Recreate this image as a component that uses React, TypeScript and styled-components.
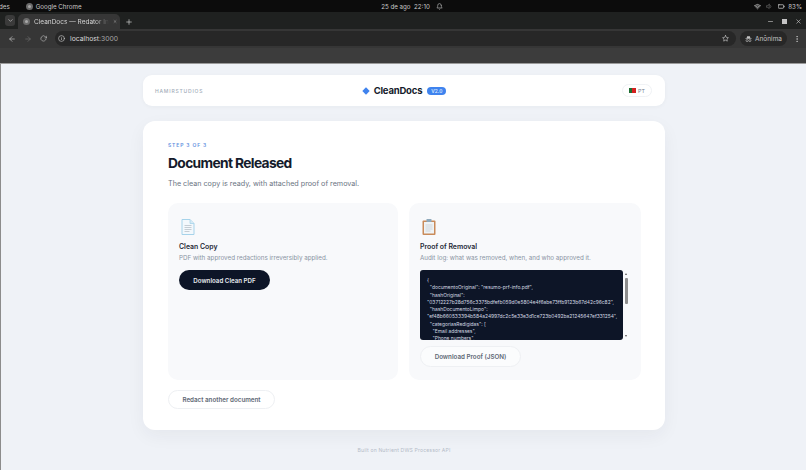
import React from 'react';
import styled, { createGlobalStyle } from 'styled-components';
import { FiArrowLeft, FiArrowRight, FiRotateCw, FiInfo, FiStar, FiX, FiPlus, FiChevronDown, FiMinus, FiMoreVertical, FiBell, FiWifi, FiVolume1, FiBattery } from 'react-icons/fi';

const GlobalStyle = createGlobalStyle`
  html, body { margin: 0; padding: 0; width: 806px; height: 470px; overflow: hidden; background: #eff2f7; }
  body { font-family: Inter, "Liberation Sans", sans-serif; }
  * { box-sizing: border-box; }
`;

const Screen = styled.div`
  width: 806px;
  height: 470px;
  display: flex;
  flex-direction: column;
  overflow: hidden;
`;

const SystemBar = styled.div`
  height: 12px;
  background: #0c0c0c;
  color: #c9c9c9;
  font-size: 6.2px;
  display: grid;
  grid-template-columns: 1fr auto 1fr;
  align-items: center;
  padding: 0 4px 0 0;
`;

const SystemLeft = styled.div`
  display: flex;
  align-items: center;
  gap: 16px;
  margin-left: -1px;
`;

const AppName = styled.div`
  display: flex;
  align-items: center;
  gap: 3px;
`;

const ChromeDot = styled.span`
  flex: none;
  width: 7px;
  height: 7px;
  border-radius: 50%;
  background: #a8a8a8;
  border: 2px solid #6c6c6c;
`;

const SystemCenter = styled.div`
  display: flex;
  align-items: center;
  gap: 6px;
  margin-left: 22px;
`;

const SystemRight = styled.div`
  display: flex;
  align-items: center;
  justify-content: flex-end;
  gap: 5px;
`;

const TabStrip = styled.div`
  height: 17px;
  background: #1f2120;
  display: flex;
  align-items: flex-end;
  padding-left: 5px;
  color: #d4d4d4;
`;

const TabMenu = styled.div`
  width: 10px;
  height: 11px;
  margin-bottom: 3px;
  margin-right: 3px;
  border-radius: 3px;
  background: #3a3a3a;
  display: flex;
  align-items: center;
  justify-content: center;
  font-size: 7px;
`;

const Tab = styled.div`
  width: 102px;
  height: 15px;
  background: #363636;
  border-radius: 5px 5px 0 0;
  display: flex;
  align-items: center;
  padding: 0 3px 0 5px;
  gap: 4px;
  font-size: 6.5px;
  white-space: nowrap;
`;

const TabTitle = styled.span`
  flex: 1;
  -webkit-mask-image: linear-gradient(to right, #000 82%, transparent 100%);
  mask-image: linear-gradient(to right, #000 82%, transparent 100%);
`;

const NewTab = styled.div`
  height: 15px;
  display: flex;
  align-items: center;
  margin-left: 5px;
  font-size: 8px;
`;

const WindowControls = styled.div`
  margin-left: auto;
  height: 15px;
  padding-right: 4px;
  display: flex;
  align-items: center;
  gap: 8px;
  font-size: 7px;
`;

const RestoreIcon = styled.span`
  width: 5px;
  height: 5px;
  background: #c4c4c4;
  display: block;
`;

const Toolbar = styled.div`
  height: 19px;
  background: #363636;
  display: flex;
  align-items: center;
  gap: 8px;
  padding: 0 5px 0 8px;
  color: #c4c4c4;
  font-size: 8px;
`;

const ArrowDim = styled.span`
  color: #6e6e6e;
  display: flex;
`;

const Omnibox = styled.div`
  flex: 1;
  height: 15px;
  border-radius: 8px;
  background: #272727;
  display: flex;
  align-items: center;
  padding: 0 7px 0 3px;
  gap: 5px;
  font-size: 6.8px;
  color: #d6d6d6;
`;

const Url = styled.span`
  flex: 1;
`;

const UrlPort = styled.span`
  color: #a4a4a4;
`;

const IncognitoPill = styled.div`
  width: 47px;
  height: 15px;
  margin-left: -4px;
  margin-right: -2px;
  padding: 0 5px;
  border-radius: 8px;
  background: #272727;
  display: flex;
  align-items: center;
  gap: 3px;
  font-size: 6.5px;
`;

const BookmarkBar = styled.div`
  height: 16px;
  background: #3c3c3c;
  border-bottom: 1px solid #9a9a9a;
`;

const Page = styled.div`
  flex: 1;
  background: #eff2f7;
  padding: 11px 141px 0 143px;
  display: flex;
  flex-direction: column;
  box-shadow: inset 1px 0 0 #8c8c8c;
`;

const Header = styled.header`
  height: 31px;
  border-radius: 9px;
  background: #fff;
  box-shadow: 0 1px 4px rgba(30, 41, 59, 0.04);
  display: grid;
  grid-template-columns: 1fr auto 1fr;
  align-items: center;
  padding: 0 13px 0 12px;
`;

const Studio = styled.div`
  font-size: 5px;
  letter-spacing: 0.8px;
  color: #a3acb9;
  font-weight: 500;
`;

const Brand = styled.div`
  display: flex;
  align-items: center;
  gap: 4px;
  margin-left: 1px;
`;

const BrandName = styled.span`
  font-size: 9.5px;
  font-weight: 700;
  letter-spacing: -0.2px;
  color: #141b2b;
`;

const Version = styled.span`
  height: 8px;
  padding: 0 4px;
  margin-left: 1px;
  border-radius: 4px;
  background: #3f83ee;
  color: #d9e7ff;
  font-size: 4.8px;
  line-height: 8px;
  font-weight: 600;
`;

const LangWrap = styled.div`
  display: flex;
  justify-content: flex-end;
`;

const LangButton = styled.div`
  width: 30px;
  height: 13px;
  border-radius: 7px;
  border: 1px solid #f0f2f5;
  display: flex;
  align-items: center;
  justify-content: center;
  gap: 2px;
  font-size: 5.3px;
  color: #76808f;
`;

const Flag = styled.span`
  flex: none;
  width: 7px;
  height: 5px;
  background: linear-gradient(to right, #1f6e33 40%, #d5201f 40%);
`;

const MainCard = styled.main`
  margin-top: 15px;
  height: 309px;
  border-radius: 12px;
  background: #fff;
  box-shadow: 0 6px 18px rgba(30, 41, 59, 0.05);
  padding: 21px 24px 0 25px;
`;

const Step = styled.div`
  font-size: 5px;
  line-height: 6px;
  letter-spacing: 0.85px;
  font-weight: 600;
  color: #5f8fe0;
`;

const Title = styled.h1`
  margin: 6px 0 0;
  font-size: 13.8px;
  line-height: 18px;
  font-weight: 700;
  letter-spacing: -0.65px;
  color: #141b2b;
`;

const Lead = styled.p`
  margin: 6px 0 0;
  font-size: 7.2px;
  line-height: 11px;
  color: #6a7482;
`;

const CardGrid = styled.div`
  margin-top: 14px;
  display: grid;
  grid-template-columns: 230px 232px;
  gap: 11px;
`;

const Panel = styled.section`
  height: 177px;
  border-radius: 10px;
  background: #f8f9fb;
  padding: 15px 11px 0;
`;

const PanelIcon = styled.svg`
  display: block;
  width: 18px;
  height: 18px;
`;

const PanelTitle = styled.h2`
  margin: 6px 0 0;
  font-size: 6.9px;
  line-height: 10px;
  font-weight: 600;
  color: #1f2937;
`;

const PanelText = styled.p`
  margin: 2px 0 0;
  font-size: 6.25px;
  line-height: 9px;
  color: #8a94a3;
  white-space: nowrap;
`;

const PrimaryButton = styled.button`
  display: block;
  margin-top: 7px;
  width: 91px;
  height: 20px;
  padding: 0;
  border: 0;
  border-radius: 11px;
  background: #0d1527;
  color: #e8ebf0;
  font: 600 6.2px Inter, sans-serif;
`;

const LogWrap = styled.div`
  margin-top: 7px;
  width: 211px;
  height: 70px;
  display: flex;
`;

const Log = styled.pre`
  margin: 0;
  width: 203px;
  height: 70px;
  border-radius: 3px;
  overflow: hidden;
  background: #0d1527;
  color: #d4d9e2;
  padding: 7px 0 0 7px;
  font: 400 4.9px/7.3px Inter, sans-serif;
  white-space: pre;
`;

const ScrollTrack = styled.div`
  flex: 1;
  position: relative;
  background: #f8f9fb;
`;

const ScrollThumb = styled.div`
  position: absolute;
  top: 8px;
  left: 2px;
  width: 3px;
  height: 26px;
  border-radius: 1px;
  background: #8e8e8e;
`;

const ScrollArrow = styled.span<{ $down?: boolean }>`
  position: absolute;
  left: 2px;
  width: 0;
  height: 0;
  border-left: 1.5px solid transparent;
  border-right: 1.5px solid transparent;
  ${(p) => (p.$down ? 'bottom: 3px; border-top: 2px solid #555;' : 'top: 3px; border-bottom: 2px solid #555;')}
`;

const GhostButton = styled.button<{ $wide?: boolean }>`
  display: block;
  width: ${(p) => (p.$wide ? '107px' : '101px')};
  height: ${(p) => (p.$wide ? '19px' : '21px')};
  margin-top: ${(p) => (p.$wide ? '10px' : '6px')};
  padding: 0;
  border: 1px solid #eef0f3;
  border-radius: 11px;
  background: ${(p) => (p.$wide ? '#fff' : '#fbfcfd')};
  color: #5f6875;
  font: 600 6.25px Inter, sans-serif;
`;

const Footer = styled.footer`
  margin-top: 17px;
  text-align: center;
  font-size: 5.1px;
  line-height: 7px;
  letter-spacing: 0.15px;
  color: #b5bcc7;
`;

const logText = `{
  "documentoOriginal": "resumo-prf-info.pdf",
  "hashOriginal":
"03712227b28d756c3375bdfefb059d0e5804e4f6abe73ffb9123b67d42c96c82",
  "hashDocumentoLimpo":
"ef48b660533394b584a24997dc2c5e33e3d1ce723b0492ba21245647ef331254",
  "categoriasRedigidas": [
    "Email addresses",
    "Phone numbers",`;

export default function App() {
  return (
    <Screen>
      <GlobalStyle />
      <SystemBar>
        <SystemLeft>
          <span>des</span>
          <AppName><ChromeDot />Google Chrome</AppName>
        </SystemLeft>
        <SystemCenter>
          <span>25 de ago&nbsp;&nbsp;22:10</span>
          <FiBell size={7} />
        </SystemCenter>
        <SystemRight>
          <FiWifi size={7} color="#fff" />
          <FiVolume1 size={7} color="#777" />
          <AppName><FiBattery size={7} color="#fff" />83%</AppName>
        </SystemRight>
      </SystemBar>
      <TabStrip>
        <TabMenu><FiChevronDown /></TabMenu>
        <Tab>
          <ChromeDot />
          <TabTitle>CleanDocs — Redator In</TabTitle>
          <FiX size={7} />
        </Tab>
        <NewTab><FiPlus /></NewTab>
        <WindowControls>
          <FiMinus />
          <RestoreIcon />
          <FiX />
        </WindowControls>
      </TabStrip>
      <Toolbar>
        <FiArrowLeft />
        <ArrowDim><FiArrowRight /></ArrowDim>
        <FiRotateCw size={7} />
        <Omnibox>
          <FiInfo size={7} />
          <Url>localhost<UrlPort>:3000</UrlPort></Url>
          <FiStar size={7} />
        </Omnibox>
        <IncognitoPill>
          <svg width="8" height="8" viewBox="0 0 8 8">
            <path d="M2.4 0.8h3.2l0.6 2.4h1.4v0.6H0.4v-0.6h1.4z" fill="#c4c4c4" />
            <circle cx="2.4" cy="5.8" r="1.2" fill="none" stroke="#c4c4c4" strokeWidth="0.7" />
            <circle cx="5.6" cy="5.8" r="1.2" fill="none" stroke="#c4c4c4" strokeWidth="0.7" />
          </svg>
          Anônima
        </IncognitoPill>
        <FiMoreVertical />
      </Toolbar>
      <BookmarkBar />
      <Page>
        <Header>
          <Studio>HAMIRSTUDIOS</Studio>
          <Brand>
            <svg width="8" height="8" viewBox="0 0 8 8">
              <path d="M4 0.3 7.7 4 4 7.7 0.3 4Z" fill="#3f83ee" />
            </svg>
            <BrandName>CleanDocs</BrandName>
            <Version>V2.0</Version>
          </Brand>
          <LangWrap>
            <LangButton><Flag />PT</LangButton>
          </LangWrap>
        </Header>
        <MainCard>
          <Step>STEP 3 OF 3</Step>
          <Title>Document Released</Title>
          <Lead>The clean copy is ready, with attached proof of removal.</Lead>
          <CardGrid>
            <Panel>
              <PanelIcon viewBox="0 0 18 18">
                <path d="M3 1.5h8l4 4v11H3z" fill="#f3f8fc" stroke="#a6d3ea" strokeWidth="1" />
                <path d="M11 1.5v4h4" fill="#d6ebf6" stroke="#a6d3ea" strokeWidth="0.8" />
                <path d="M5.5 7.5h7M5.5 9.5h7M5.5 11.5h7M5.5 13.5h5" stroke="#b9c1c9" strokeWidth="0.8" />
              </PanelIcon>
              <PanelTitle>Clean Copy</PanelTitle>
              <PanelText>PDF with approved redactions irreversibly applied.</PanelText>
              <PrimaryButton>Download Clean PDF</PrimaryButton>
            </Panel>
            <Panel>
              <PanelIcon viewBox="0 0 18 18">
                <rect x="2.5" y="2.5" width="13" height="14.5" rx="1" fill="#c98b5a" />
                <rect x="4" y="4" width="10" height="11.5" fill="#eef3f6" />
                <rect x="6.5" y="1" width="5" height="3" rx="0.6" fill="#8fa9bb" />
                <path d="M5.5 7h7M5.5 9h7M5.5 11h7M5.5 13h5" stroke="#c3cad0" strokeWidth="0.7" />
              </PanelIcon>
              <PanelTitle>Proof of Removal</PanelTitle>
              <PanelText>Audit log: what was removed, when, and who approved it.</PanelText>
              <LogWrap>
                <Log>{logText}</Log>
                <ScrollTrack>
                  <ScrollArrow />
                  <ScrollThumb />
                  <ScrollArrow $down />
                </ScrollTrack>
              </LogWrap>
              <GhostButton>Download Proof (JSON)</GhostButton>
            </Panel>
          </CardGrid>
          <GhostButton $wide>Redact another document</GhostButton>
        </MainCard>
        <Footer>Built on Nutrient DWS Processor API</Footer>
      </Page>
    </Screen>
  );
}
